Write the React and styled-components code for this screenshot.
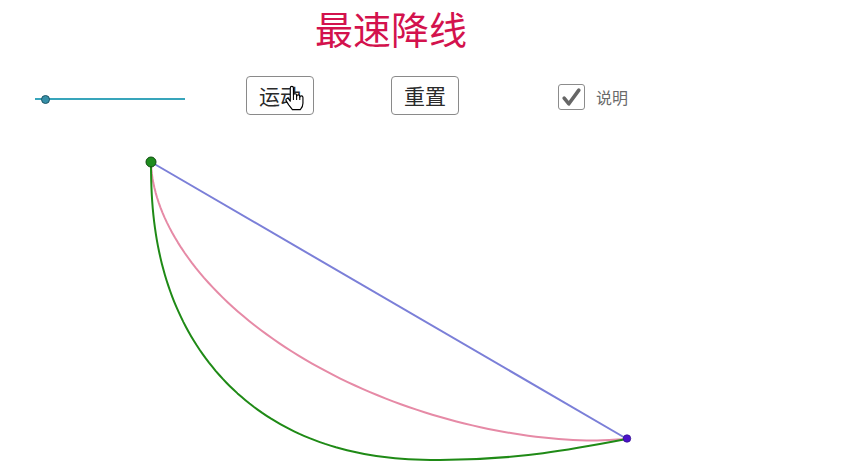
import styled, { createGlobalStyle } from "styled-components";

const GlobalStyle = createGlobalStyle`
  html, body {
    margin: 0;
    padding: 0;
    background: #ffffff;
  }
  body {
    font-family: "Noto Sans CJK SC", "Noto Sans", sans-serif;
  }
`;

const Page = styled.div`
  position: relative;
  width: 843px;
  height: 466px;
  overflow: hidden;
  background: #fff;
`;

const Title = styled.h1`
  margin: 0 0 0 315px;
  height: 56px;
  line-height: 56px;
  font-size: 38px;
  font-weight: 400;
  color: #d3124d;
  font-family: "Noto Sans CJK SC", serif;
`;

const Toolbar = styled.div`
  display: flex;
  align-items: center;
  height: 39px;
  margin-top: 20px;
  padding-left: 35px;
`;

const Slider = styled.div`
  position: relative;
  width: 150px;
  height: 12px;
  margin: 7px 61px 0 0;
  display: flex;
  align-items: center;
`;

const Track = styled.div`
  width: 100%;
  height: 2px;
  background: #38a5bb;
`;

const Knob = styled.div`
  position: absolute;
  left: 6px;
  top: 1.5px;
  width: 7px;
  height: 7px;
  border-radius: 50%;
  background: #3690a8;
  border: 1.2px solid #1d5566;
`;

const Button = styled.button`
  position: relative;
  width: 68px;
  height: 39px;
  margin-right: ${(p) => p.$gap}px;
  padding: 0;
  border: 1px solid #8a8a8a;
  border-radius: 4px;
  background: #fff;
  color: #2a2a2a;
  font-family: "Noto Sans CJK SC", sans-serif;
  font-size: 21px;
  line-height: 37px;
  cursor: pointer;
`;

const Cursor = styled.svg`
  position: absolute;
  left: 38px;
  top: 8px;
  width: 19px;
  height: 26px;
`;

const Check = styled.div`
  width: 27px;
  height: 26px;
  box-sizing: border-box;
  border: 1.5px solid #8c8c8c;
  border-radius: 3px;
  margin: 3px 11px 0 0;
  display: flex;
  align-items: center;
  justify-content: center;
`;

const Label = styled.span`
  font-size: 16px;
  color: #6a6a6a;
  margin-top: 3px;
`;

const Canvas = styled.svg`
  display: block;
  width: 843px;
  height: 351px;
`;

const A = [151, 162];
const B = [627, 439];

// quarter of a superellipse from A (vertical tangent) down to its bottom point
function arc(cx, a, b, n, steps = 80) {
  const pts = [];
  for (let i = 0; i <= steps; i++) {
    const th = (i / steps) * (Math.PI / 2);
    const c = Math.pow(Math.cos(th), 2 / n);
    const s = Math.pow(Math.sin(th), 2 / n);
    pts.push([cx - a * c, A[1] + b * s]);
  }
  return "M" + pts.map((p) => `${p[0].toFixed(2)} ${p[1].toFixed(2)}`).join(" L");
}

const greenPath =
  arc(440, 289, 298, 2.3) + ` C520 460 580 448 ${B[0]} ${B[1]}`;
const pinkPath =
  arc(592, 441, 278.5, 1.8) + ` C605 440.5 616 439.5 ${B[0]} ${B[1]}`;

export default function App() {
  return (
    <Page>
      <GlobalStyle />
      <Title>最速降线</Title>
      <Toolbar>
        <Slider>
          <Track />
          <Knob />
        </Slider>
        <Button $gap={77}>
          运动
          <Cursor viewBox="0 0 18 24">
            <path
              d="M5 2.5 Q5 1 6.5 1 Q8 1 8 2.5 L8 9 Q8 8 9.5 8 Q11 8 11 9.5 L11 10.5 Q11 9 12.5 9 Q14 9 14 10.5 L14 11.5 Q14 10 15.5 10 Q17 10 17 11.5 L17 17 Q17 20.5 14.5 23 L7 23 Q5.5 21 3.5 18.5 L1 14.5 Q0.5 13 1.8 12.5 Q3 12 4 13.5 L5 15 Z"
              fill="#fff"
              stroke="#000"
              strokeWidth="1.1"
              strokeLinejoin="round"
            />
            <path d="M8 9 L8 14 M11 10.5 L11 14 M14 11.5 L14 14" stroke="#000" strokeWidth="1" />
          </Cursor>
        </Button>
        <Button $gap={99}>重置</Button>
        <Check>
          <svg width="21" height="21" viewBox="0 0 20 20">
            <path d="M3 10.5 L7.5 16 L17 3" fill="none" stroke="#666" strokeWidth="3.4" strokeLinecap="round" strokeLinejoin="round" />
          </svg>
        </Check>
        <Label>说明</Label>
      </Toolbar>
      <Canvas viewBox="0 115 843 351">
        <line x1={A[0]} y1={A[1]} x2={B[0]} y2={B[1]} stroke="#7b7fd8" strokeWidth="2" />
        <path d={pinkPath} fill="none" stroke="#e68aa6" strokeWidth="2" strokeLinejoin="round" />
        <path d={greenPath} fill="none" stroke="#1f8a16" strokeWidth="2" strokeLinejoin="round" />
        <circle cx={A[0]} cy={A[1]} r="5" fill="#1e8c1e" stroke="#0f4d0f" strokeWidth="1" />
        <circle cx={B[0]} cy="438.5" r="3.8" fill="#4a12c8" stroke="#2a0a80" strokeWidth="0.6" />
      </Canvas>
    </Page>
  );
}
